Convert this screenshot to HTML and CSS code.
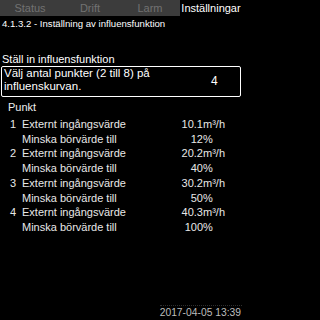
FILE: index.html
```html
<!DOCTYPE html>
<html lang="sv">
<head>
<meta charset="utf-8">
<link rel="stylesheet" href="styles.css">
</head>
<body>
<div class="screen">
  <div class="tabs">
    <div class="tab">Status</div>
    <div class="tab">Drift</div>
    <div class="tab">Larm</div>
    <div class="tab active">Inställningar</div>
  </div>
  <div class="crumb">4.1.3.2 - Inställning av influensfunktion</div>
  <div class="heading">Ställ in influensfunktion</div>
  <div class="box">
    <div class="box-text">Välj antal punkter (2 till 8) på<br>influenskurvan.</div>
    <div class="box-val">4</div>
  </div>
  <div class="punkt">Punkt</div>
  <div class="rows">
    <div class="row"><span class="idx">1</span><span class="lbl">Externt ingångsvärde</span><span class="num">10.1</span><span class="unit">m³/h</span></div>
    <div class="row"><span class="idx"></span><span class="lbl">Minska börvärde till</span><span class="num">12</span><span class="unit">%</span></div>
    <div class="row"><span class="idx">2</span><span class="lbl">Externt ingångsvärde</span><span class="num">20.2</span><span class="unit">m³/h</span></div>
    <div class="row"><span class="idx"></span><span class="lbl">Minska börvärde till</span><span class="num">40</span><span class="unit">%</span></div>
    <div class="row"><span class="idx">3</span><span class="lbl">Externt ingångsvärde</span><span class="num">30.2</span><span class="unit">m³/h</span></div>
    <div class="row"><span class="idx"></span><span class="lbl">Minska börvärde till</span><span class="num">50</span><span class="unit">%</span></div>
    <div class="row"><span class="idx">4</span><span class="lbl">Externt ingångsvärde</span><span class="num">40.3</span><span class="unit">m³/h</span></div>
    <div class="row"><span class="idx"></span><span class="lbl">Minska börvärde till</span><span class="num">100</span><span class="unit">%</span></div>
  </div>
  <div class="footer"><span class="date">2017-04-05 13:39</span></div>
</div>
</body>
</html>
```
FILE: styles.css
```css
html, body {
  margin: 0;
  padding: 0;
  background: #000;
}
.screen {
  width: 242px;
  height: 320px;
  display: flex;
  flex-direction: column;
  font-family: "Liberation Sans", Arial, sans-serif;
  font-size: 11px;
  color: #fff;
  overflow: hidden;
}
.tabs {
  display: grid;
  grid-template-columns: 60px 60px 60px 62px;
  height: 16px;
  background: #3c3c3c;
}
.tab {
  color: #727272;
  text-align: center;
  line-height: 17px;
  white-space: nowrap;
}
.tab.active {
  background: #000;
  color: #fff;
}
.crumb {
  font-size: 9.6px;
  line-height: 13px;
  margin-top: 1px;
  padding-left: 2px;
  white-space: nowrap;
}
.heading {
  line-height: 13px;
  margin-top: 23px;
  padding-left: 2px;
}
.box {
  margin: 0 1px;
  border: 1px solid #fff;
  border-radius: 2px;
  display: flex;
  align-items: center;
  padding: 0 0 3px 2px;
}
.box-text {
  flex: 1;
  font-size: 11.5px;
  line-height: 13px;
}
.box-val {
  width: 29px;
  font-size: 12px;
  padding-top: 2px;
}
.punkt {
  line-height: 13px;
  margin-top: 4px;
  padding-left: 8px;
  color: #eee;
}
.rows {
  margin-top: 3px;
  color: #e8e8e8;
}
.row {
  display: flex;
  line-height: 14.7px;
  white-space: nowrap;
}
.idx {
  width: 12px;
  padding-left: 10px;
}
.lbl {
  width: 150px;
}
.num {
  width: 31px;
  text-align: right;
}
.footer {
  margin-top: auto;
  display: flex;
  justify-content: flex-end;
  padding-bottom: 1px;
}
.date {
  font-size: 10.3px;
  line-height: 13px;
  color: #bdbdbd;
  padding-right: 1px;
  border-top: 1px dotted #2e2e2e;
}
```
